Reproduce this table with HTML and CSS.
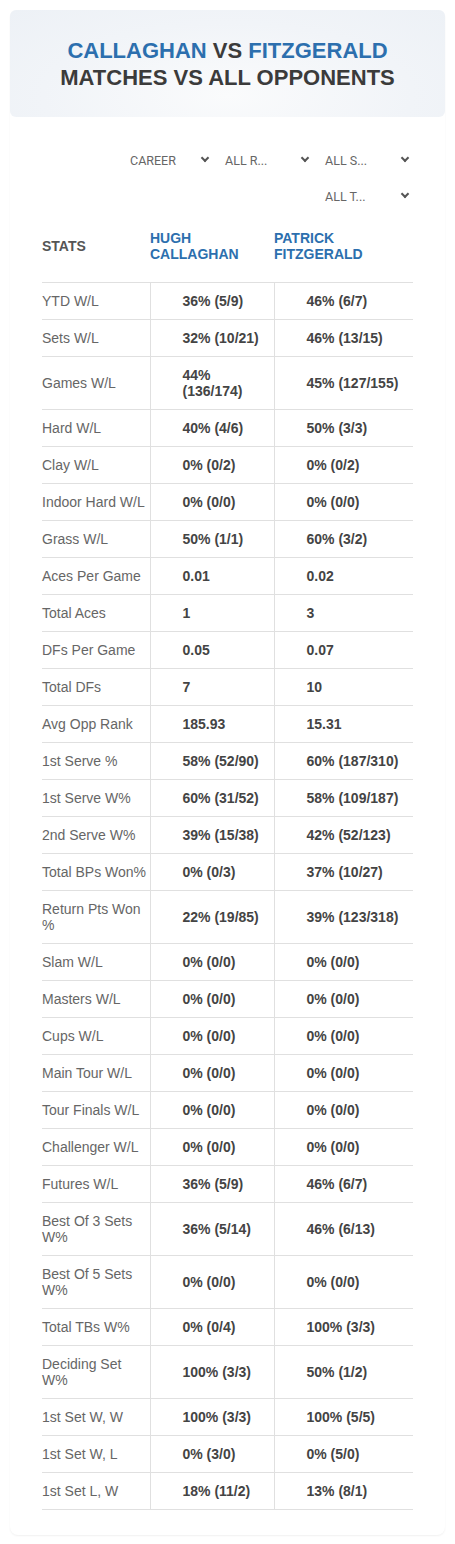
FILE: index.html
```html
<!DOCTYPE html>
<html lang="en">
<head>
    <meta charset="UTF-8">
    <meta name="viewport" content="width=device-width, initial-scale=1.0">
    <title>Callaghan vs Fitzgerald</title>
    <link rel="stylesheet" href="styles.css">
</head>
<body>
    <div class="card">
        <div class="card-head">
            <h1>
                <span class="blue">CALLAGHAN</span> VS <span class="blue">FITZGERALD</span><br>
                MATCHES VS ALL OPPONENTS
            </h1>
        </div>

        <div class="filters">
            <div class="select select-first"><span>CAREER</span><i class="chev"></i></div>
            <div class="select"><span>ALL R...</span><i class="chev"></i></div>
            <div class="select"><span>ALL S...</span><i class="chev"></i></div>
            <div class="select"><span>ALL T...</span><i class="chev"></i></div>
        </div>

        <table class="stats">
            <colgroup>
                <col class="c-label">
                <col class="c-p1">
                <col class="c-p2">
            </colgroup>
            <thead>
                <tr>
                    <th class="th-stats">STATS</th>
                    <th class="th-name">HUGH CALLAGHAN</th>
                    <th class="th-name">PATRICK FITZGERALD</th>
                </tr>
            </thead>
            <tbody>
                <tr><td>YTD W/L</td><td>36% (5/9)</td><td>46% (6/7)</td></tr>
                <tr><td>Sets W/L</td><td>32% (10/21)</td><td>46% (13/15)</td></tr>
                <tr><td>Games W/L</td><td>44% (136/174)</td><td>45% (127/155)</td></tr>
                <tr><td>Hard W/L</td><td>40% (4/6)</td><td>50% (3/3)</td></tr>
                <tr><td>Clay W/L</td><td>0% (0/2)</td><td>0% (0/2)</td></tr>
                <tr><td>Indoor Hard W/L</td><td>0% (0/0)</td><td>0% (0/0)</td></tr>
                <tr><td>Grass W/L</td><td>50% (1/1)</td><td>60% (3/2)</td></tr>
                <tr><td>Aces Per Game</td><td>0.01</td><td>0.02</td></tr>
                <tr><td>Total Aces</td><td>1</td><td>3</td></tr>
                <tr><td>DFs Per Game</td><td>0.05</td><td>0.07</td></tr>
                <tr><td>Total DFs</td><td>7</td><td>10</td></tr>
                <tr><td>Avg Opp Rank</td><td>185.93</td><td>15.31</td></tr>
                <tr><td>1st Serve %</td><td>58% (52/90)</td><td>60% (187/310)</td></tr>
                <tr><td>1st Serve W%</td><td>60% (31/52)</td><td>58% (109/187)</td></tr>
                <tr><td>2nd Serve W%</td><td>39% (15/38)</td><td>42% (52/123)</td></tr>
                <tr><td>Total BPs Won%</td><td>0% (0/3)</td><td>37% (10/27)</td></tr>
                <tr><td>Return Pts Won %</td><td>22% (19/85)</td><td>39% (123/318)</td></tr>
                <tr><td>Slam W/L</td><td>0% (0/0)</td><td>0% (0/0)</td></tr>
                <tr><td>Masters W/L</td><td>0% (0/0)</td><td>0% (0/0)</td></tr>
                <tr><td>Cups W/L</td><td>0% (0/0)</td><td>0% (0/0)</td></tr>
                <tr><td>Main Tour W/L</td><td>0% (0/0)</td><td>0% (0/0)</td></tr>
                <tr><td>Tour Finals W/L</td><td>0% (0/0)</td><td>0% (0/0)</td></tr>
                <tr><td>Challenger W/L</td><td>0% (0/0)</td><td>0% (0/0)</td></tr>
                <tr><td>Futures W/L</td><td>36% (5/9)</td><td>46% (6/7)</td></tr>
                <tr><td>Best Of 3 Sets W%</td><td>36% (5/14)</td><td>46% (6/13)</td></tr>
                <tr><td>Best Of 5 Sets W%</td><td>0% (0/0)</td><td>0% (0/0)</td></tr>
                <tr><td>Total TBs W%</td><td>0% (0/4)</td><td>100% (3/3)</td></tr>
                <tr><td>Deciding Set W%</td><td>100% (3/3)</td><td>50% (1/2)</td></tr>
                <tr><td>1st Set W, W</td><td>100% (3/3)</td><td>100% (5/5)</td></tr>
                <tr><td>1st Set W, L</td><td>0% (3/0)</td><td>0% (5/0)</td></tr>
                <tr><td>1st Set L, W</td><td>18% (11/2)</td><td>13% (8/1)</td></tr>
            </tbody>
        </table>
    </div>
</body>
</html>
```

FILE: styles.css
```css
*{
    margin: 0;
    padding: 0;
    box-sizing: border-box;
}
body{
    background: #fff;
    font-family: "Liberation Sans", Arial, sans-serif;
    color: #444;
}
.card{
    margin: 10px;
    padding-bottom: 25px;
    border-radius: 8px;
    background: #fff;
    box-shadow: 0 1px 2px rgba(0, 0, 0, .06);
}
.card-head{
    height: 107px;
    display: flex;
    align-items: center;
    justify-content: center;
    border-radius: 6px;
    background: radial-gradient(ellipse at 50% 80%, #fafbfc 0%, #f1f4f8 60%, #edf1f6 100%);
}
.card-head h1{
    text-align: center;
    font-size: 22px;
    line-height: 27px;
    font-weight: bold;
    color: #3b3b3b;
}
.blue{
    color: #2c6fae;
}
.filters{
    display: flex;
    flex-wrap: wrap;
    justify-content: flex-end;
    gap: 8px 10px;
    margin: 29px 32px 0;
}
.select{
    width: 90px;
    height: 28px;
    display: flex;
    align-items: center;
    justify-content: space-between;
    padding: 0 5px 0 2px;
    font-family: Roboto, "Open Sans", sans-serif;
    font-size: 12.5px;
    color: #666;
}
.select-first{
    padding-left: 7px;
}
.chev{
    width: 6px;
    height: 6px;
    margin-top: -4px;
    border-right: 2px solid #555;
    border-bottom: 2px solid #555;
    transform: rotate(45deg);
}
.stats{
    width: 371px;
    margin: 20px 32px 0;
    border-collapse: collapse;
    table-layout: fixed;
    font-size: 14px;
    line-height: 16px;
}
.c-label{
    width: 108px;
}
.c-p1{
    width: 124px;
}
.c-p2{
    width: 139px;
}
.stats th{
    text-align: left;
    vertical-align: middle;
    padding: 0 20px 20px 0;
    font-weight: bold;
    border-bottom: 1px solid #e0e0e0;
}
.th-stats{
    color: #555;
}
.th-name{
    color: #2c6fae;
}
.stats td{
    padding: 10px 4px 10px 32px;
    vertical-align: middle;
    border-bottom: 1px solid #e0e0e0;
    border-left: 1px solid #e0e0e0;
    font-weight: bold;
    color: #444;
}
.stats td:first-child{
    padding-left: 0;
    padding-right: 0;
    border-left: none;
    font-weight: normal;
    color: #666;
}
```
